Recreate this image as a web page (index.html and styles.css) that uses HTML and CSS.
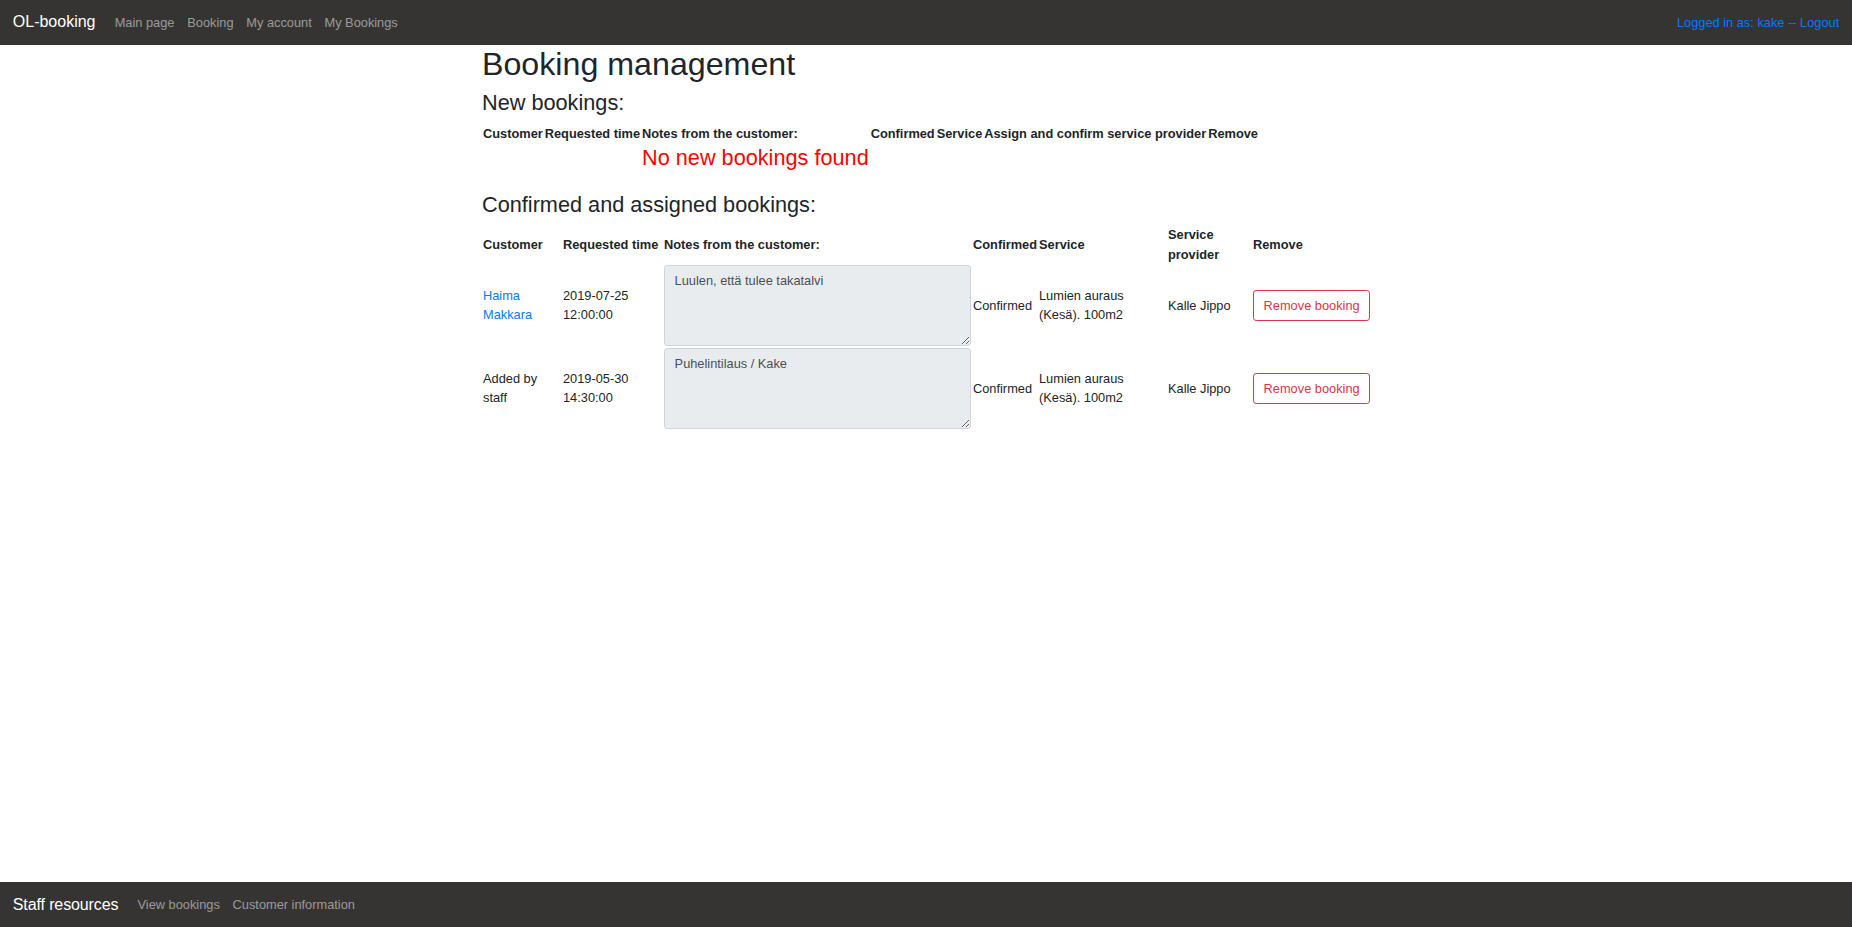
FILE: index.html
```html
<!DOCTYPE html>
<html lang="en">
<head>
<meta charset="utf-8">
<title>OL-booking</title>
<link rel="stylesheet" href="styles.css">
</head>
<body>
<nav class="topbar">
  <a class="brand" href="#">OL-booking</a>
  <ul class="nav-links">
    <li><a href="#">Main page</a></li>
    <li><a href="#">Booking</a></li>
    <li><a href="#">My account</a></li>
    <li><a href="#">My Bookings</a></li>
  </ul>
  <a class="user" href="#">Logged in as: kake -- Logout</a>
</nav>

<main class="container">
  <h1 class="title">Booking management</h1>
  <h3 class="subtitle">New bookings:</h3>
  <table class="plain-table">
    <thead>
      <tr>
        <th>Customer</th>
        <th>Requested time</th>
        <th>Notes from the customer:</th>
        <th>Confirmed</th>
        <th>Service</th>
        <th>Assign and confirm service provider</th>
        <th>Remove</th>
      </tr>
    </thead>
    <tbody>
      <tr>
        <td></td>
        <td></td>
        <td><h3 class="empty-note">No new bookings found</h3></td>
        <td></td>
        <td></td>
        <td></td>
        <td></td>
      </tr>
    </tbody>
  </table>

  <h3 class="subtitle">Confirmed and assigned bookings:</h3>
  <table class="booking-table">
    <colgroup>
      <col class="c-customer">
      <col class="c-time">
      <col class="c-notes">
      <col class="c-confirmed">
      <col class="c-service">
      <col class="c-provider">
      <col class="c-remove">
    </colgroup>
    <thead>
      <tr>
        <th>Customer</th>
        <th>Requested time</th>
        <th>Notes from the customer:</th>
        <th>Confirmed</th>
        <th>Service</th>
        <th>Service provider</th>
        <th>Remove</th>
      </tr>
    </thead>
    <tbody>
      <tr>
        <td><a class="link" href="#">Haima Makkara</a></td>
        <td>2019-07-25 12:00:00</td>
        <td><textarea class="notes" readonly>Luulen, että tulee takatalvi</textarea></td>
        <td>Confirmed</td>
        <td>Lumien auraus (Kesä). 100m2</td>
        <td>Kalle Jippo</td>
        <td><button class="btn-remove" type="button">Remove booking</button></td>
      </tr>
      <tr>
        <td>Added by staff</td>
        <td>2019-05-30 14:30:00</td>
        <td><textarea class="notes" readonly>Puhelintilaus / Kake</textarea></td>
        <td>Confirmed</td>
        <td>Lumien auraus (Kesä). 100m2</td>
        <td>Kalle Jippo</td>
        <td><button class="btn-remove" type="button">Remove booking</button></td>
      </tr>
    </tbody>
  </table>
</main>

<footer class="bottombar">
  <a class="brand brand-footer" href="#">Staff resources</a>
  <ul class="nav-links">
    <li><a href="#">View bookings</a></li>
    <li><a href="#">Customer information</a></li>
  </ul>
</footer>
</body>
</html>
```

FILE: styles.css
```css
* {
  box-sizing: border-box;
}

html, body {
  margin: 0;
  padding: 0;
}

body {
  font-family: "Liberation Sans", Arial, sans-serif;
  font-size: 12.8px;
  line-height: 19.2px;
  color: #212529;
  background: #fff;
  min-height: 100vh;
  display: flex;
  flex-direction: column;
}

a {
  text-decoration: none;
}

.topbar,
.bottombar {
  display: flex;
  align-items: center;
  padding: 6.4px 12.8px;
  background: #353432;
}

.bottombar {
  margin-top: auto;
}

.brand {
  display: inline-block;
  font-size: 16px;
  line-height: 24px;
  padding: 4px 0;
  margin-right: 12.8px;
  color: #fff;
  white-space: nowrap;
}

.brand-footer {
  letter-spacing: -0.12px;
}

.nav-links {
  display: flex;
  list-style: none;
  margin: 0;
  padding: 0;
}

.nav-links a {
  display: block;
  padding: 6.4px;
  color: rgba(255, 255, 255, 0.5);
}

.user {
  margin-left: auto;
  color: #007bff;
}

.container {
  width: 912px;
  margin: 0 auto;
  padding: 0 12px;
}

.title {
  font-size: 32.2px;
  font-weight: 500;
  line-height: 38.4px;
  margin: 0 0 6.4px;
}

.subtitle {
  font-size: 21.7px;
  font-weight: 500;
  line-height: 26.88px;
  margin: 0 0 6.4px;
}

.plain-table {
  border-collapse: collapse;
  margin-bottom: 12.8px;
}

.plain-table th,
.plain-table td {
  padding: 1px;
  text-align: left;
  vertical-align: middle;
}

.empty-note {
  font-size: 21.7px;
  font-weight: 500;
  line-height: 26.88px;
  margin: 0 0 6.4px;
  color: #ff0000;
  white-space: nowrap;
}

.booking-table {
  width: 100%;
  table-layout: fixed;
  border-collapse: collapse;
}

.booking-table th,
.booking-table td {
  padding: 1px;
  text-align: left;
  vertical-align: middle;
}

.booking-table th {
  padding-top: 0;
  padding-bottom: 0;
}

.c-customer { width: 80px; }
.c-time { width: 101px; }
.c-notes { width: 309px; }
.c-confirmed { width: 66px; }
.c-service { width: 129px; }
.c-provider { width: 85px; }
.c-remove { width: 118px; }

.link {
  color: #007bff;
}

.notes {
  display: block;
  width: 100%;
  height: 81px;
  margin: 0;
  padding: 5.6px 9.6px 4px;
  font-family: inherit;
  font-size: 12.8px;
  line-height: 19.2px;
  color: #495057;
  background: #e9ecef;
  border: 1px solid #ced4da;
  border-radius: 3.2px;
  resize: vertical;
}

.btn-remove {
  display: inline-block;
  padding: 4.8px 9.6px;
  font-family: inherit;
  font-size: 12.8px;
  line-height: 19.2px;
  color: #dc3545;
  background: transparent;
  border: 1px solid #dc3545;
  border-radius: 3.2px;
  cursor: pointer;
  white-space: nowrap;
}
```
